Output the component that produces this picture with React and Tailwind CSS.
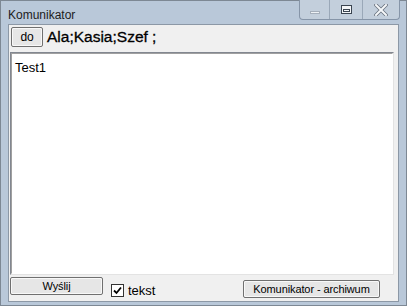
import React from 'react'

const font = { fontFamily: '"Liberation Sans", Arial, sans-serif' }

const WinButton = ({ className, children }) => (
    <button
        className={`flex items-center justify-center whitespace-nowrap bg-[#e6e6e6] border border-[#707070] rounded-[2px] text-[11px] tracking-[-0.1px] text-black shadow-[inset_0_0_0_1px_#f8f8f8] ${className}`}
    >
        {children}
    </button>
)

export default function App() {
    return (
        <div className="w-[407px] h-[306px] overflow-hidden" style={font}>
            <div className="w-full h-full flex flex-col bg-[#b9c8d9] border border-[#7d8894] px-[7px] pb-[7px]">
                {/* title bar */}
                <div className="h-[24px] flex items-start justify-between">
                    <span className="mt-[5px] text-[12px] text-[#1c1c1c]">Komunikator</span>
                    <div className="flex h-[20px] -mt-px mr-[-1px] border border-[#8695a8] border-t-0 rounded-b-[4px] bg-[#c3cfdc] overflow-hidden">
                        <div className="w-[30px] flex items-center justify-center border-r border-[#9aa8b8]">
                            <div className="w-[10px] h-[3px] bg-[#eef2f6] border border-[#a5afbb] mt-[6px]"></div>
                        </div>
                        <div className="w-[33px] flex items-center justify-center border-r border-[#9aa8b8]">
                            <div className="w-[11px] h-[9px] border border-[#3a4450] bg-[#f4f6f8] flex items-center justify-center">
                                <div className="w-[7px] h-[3px] border border-[#3a4450] mt-[1px]"></div>
                            </div>
                        </div>
                        <div className="w-[36px] flex items-center justify-center">
                            <svg width="14" height="12" viewBox="0 0 14 12">
                                <path d="M2 1 L12 11 M12 1 L2 11" stroke="#6b7480" strokeWidth="3.6" strokeLinecap="square" />
                                <path d="M2 1 L12 11 M12 1 L2 11" stroke="#f6f8fa" strokeWidth="2" strokeLinecap="square" />
                            </svg>
                        </div>
                    </div>
                </div>
                {/* client area */}
                <div className="flex-1 flex flex-col bg-[#f0f0f0] border border-[#8c98a6]">
                    <div className="flex items-start h-[27px] pt-[2px]">
                        <WinButton className="ml-[2px] w-[32px] h-[20px] text-[12px]">do</WinButton>
                        <span className="ml-[4px] mt-[1px] text-[15.5px] leading-[18px] text-black [-webkit-text-stroke:0.3px_#000]">Ala;Kasia;Szef ;</span>
                    </div>
                    <div className="ml-[1px] w-[384px] h-[223px] bg-white border border-[#828790] border-r-[#e3e3e3] border-b-[#e3e3e3]">
                        <div className="border border-[#a0a0a0] border-r-white border-b-white h-full px-[3px] pt-[7px] text-[13px] text-black leading-[14px]">
                            Test1
                        </div>
                    </div>
                    <div className="flex items-start mt-[2px]">
                        <WinButton className="ml-[1px] w-[93px] h-[18px]">Wyślij</WinButton>
                        <label className="ml-[8px] mt-[4px] w-[50px] flex items-center gap-[4px] text-[13px] text-black">
                            <span className="w-[13px] h-[13px] border border-[#333] bg-white flex items-center justify-center">
                                <svg width="9" height="9" viewBox="0 0 9 9">
                                    <path d="M1 4.5 L3.5 7 L8 1.5" stroke="#000" strokeWidth="1.8" fill="none" />
                                </svg>
                            </span>
                            tekst
                        </label>
                        <WinButton className="ml-[82px] mt-[3px] w-[137px] h-[18px]">Komunikator - archiwum</WinButton>
                    </div>
                </div>
            </div>
        </div>
    )
}
